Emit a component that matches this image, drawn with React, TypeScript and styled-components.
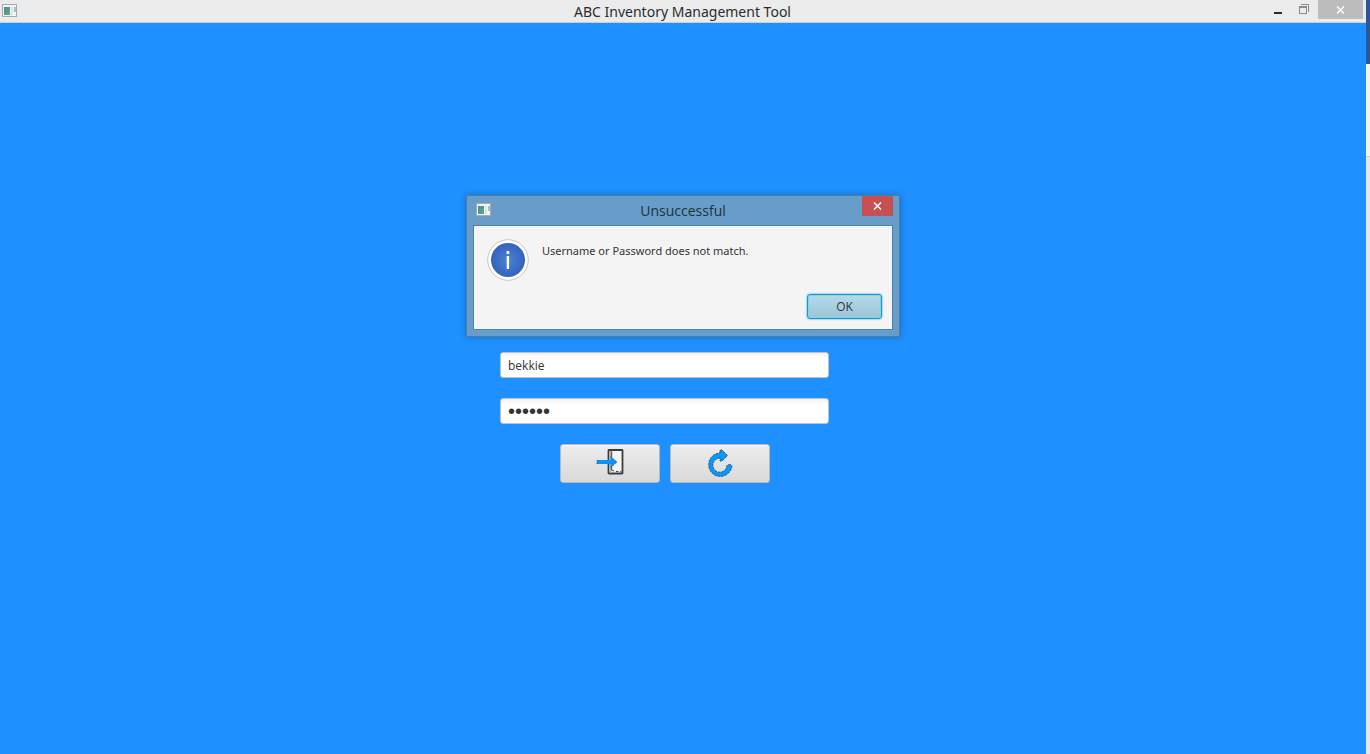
import React, { useState } from 'react';
import styled, { createGlobalStyle } from 'styled-components';

const GlobalStyle = createGlobalStyle`
  *, *::before, *::after { box-sizing: border-box; }
  body {
    margin: 0;
    font-family: 'Open Sans', 'Noto Sans', sans-serif;
    color: #333;
  }
  button, input { font: inherit; color: inherit; }
`;

const Desktop = styled.div`
  display: flex;
  min-height: 100vh;
`;

const AppWindow = styled.div`
  position: relative;
  flex: 1;
  display: flex;
  flex-direction: column;
`;

const BackgroundApp = styled.div`
  display: flex;
  flex-direction: column;
  width: 4px;
  background: #e6e6e6;
`;

const BackgroundHeader = styled.div`
  height: 64px;
  background: #2b579a;
`;

const BackgroundToolbar = styled.div`
  height: 93px;
  background: #f3f3f3;
  border-bottom: 1px solid #cfcfcf;
`;

const TitleBar = styled.header`
  display: grid;
  grid-template-columns: 1fr auto 1fr;
  height: 23px;
  padding: 0 3px 0 2px;
  background: #ebebeb;
  border-bottom: 1px solid #d2cfcb;
`;

const TitleIcon = styled.div`
  display: flex;
  align-items: center;
  height: 22px;
`;

const AppTitle = styled.h1`
  margin: 0;
  font-family: 'Noto Sans', sans-serif;
  font-size: 14px;
  line-height: 24px;
  font-weight: 400;
  color: #2b2b2b;
`;

const WindowControls = styled.div`
  display: flex;
  justify-content: flex-end;
`;

const ControlButton = styled.button<{ $width: number; $fill?: string }>`
  display: flex;
  align-items: center;
  justify-content: center;
  width: ${(p) => p.$width}px;
  height: ${(p) => (p.$width === 31 ? 20 : 19)}px;
  padding: 0;
  border: 0;
  background: ${(p) => p.$fill ?? 'transparent'};
`;

const Content = styled.main`
  flex: 1;
  display: flex;
  justify-content: center;
  padding: 329px 37px 20px 0;
  background: #1e90ff;
`;

const LoginForm = styled.form`
  display: flex;
  flex-direction: column;
  align-items: center;
  gap: 20px;
  width: 329px;
`;

const Field = styled.input`
  width: 100%;
  height: 26px;
  padding: 0 7px;
  border: 1px solid #c0c0c0;
  border-radius: 3px;
  background: linear-gradient(#f0f0f0, #fff 5px);
  font-size: 12px;
  outline: none;

  &[type='password'] {
    font-family: 'Liberation Sans', sans-serif;
    font-size: 20px;
  }
`;

const Actions = styled.div`
  display: flex;
  gap: 10px;
`;

const ActionButton = styled.button`
  display: flex;
  align-items: center;
  justify-content: center;
  width: 100px;
  height: 39px;
  padding: 0;
  border: 1px solid #b8b8b8;
  border-radius: 3px;
  background: linear-gradient(#ededed, #d9d9d9);
  box-shadow: inset 0 1px #f8f8f8;
`;

const Dialog = styled.section`
  position: absolute;
  top: 195px;
  left: 50%;
  transform: translateX(-50%);
  width: 434px;
  padding: 0 6px 6px;
  border: 1px solid #4d7ca0;
  background: #679dc8;
  box-shadow: 0 0 6px rgba(0, 0, 0, 0.25);
`;

const DialogHeader = styled.header`
  display: grid;
  grid-template-columns: 1fr auto 1fr;
  height: 29px;
`;

const DialogIcon = styled(TitleIcon)`
  height: 28px;
  padding-left: 3px;
`;

const DialogTitle = styled.h2`
  margin: 0;
  font-size: 14px;
  line-height: 30px;
  font-weight: 400;
  color: #22303c;
`;

const DialogBody = styled.div`
  display: flex;
  flex-direction: column;
  justify-content: space-between;
  height: 105px;
  padding: 13px 10px 10px 13px;
  border: 1px solid #4c83ad;
  background: #f4f4f4;
`;

const Message = styled.div`
  display: flex;
  gap: 13px;
`;

const MessageText = styled.p`
  margin: 3px 0 0;
  font-family: 'Noto Sans', sans-serif;
  font-size: 11px;
  line-height: 18px;
`;

const OkButton = styled.button`
  align-self: flex-end;
  width: 75px;
  height: 25px;
  padding: 0;
  border: 1px solid #039ed3;
  border-radius: 3px;
  background: linear-gradient(#b5d9e9, #9bc5d8);
  box-shadow: 0 0 2px #039ed3, inset 0 0 0 1px #8fcfe5;
  font-size: 12px;
`;

const JavaWindowIcon = () => (
  <svg width="16" height="14" viewBox="0 0 16 14" aria-hidden="true">
    <defs>
      <linearGradient id="pane" x1="0" y1="0" x2="1" y2="1">
        <stop offset="0" stopColor="#5484a4" />
        <stop offset="1" stopColor="#55b07c" />
      </linearGradient>
    </defs>
    <rect x="0.5" y="0.5" width="14" height="12" fill="#f4f4f6" stroke="#a5a8ac" />
    <rect x="2" y="3" width="6" height="8" fill="url(#pane)" />
    <rect x="9" y="3" width="2" height="8" fill="#e0e2e2" />
    <rect x="12" y="3" width="2" height="5" fill="#9ac9c0" />
  </svg>
);

const CloseGlyph = () => (
  <svg width="9" height="8" viewBox="0 0 9 8" aria-hidden="true">
    <path d="M1 0.5 8 7.5M8 0.5 1 7.5" stroke="#fff" strokeWidth="1.5" />
  </svg>
);

const MinimizeGlyph = () => (
  <svg width="8" height="10" viewBox="0 0 8 10" aria-hidden="true">
    <path d="M0 7h8v2H0z" fill="#2b2b2b" />
  </svg>
);

const RestoreGlyph = () => (
  <svg width="12" height="11" viewBox="0 0 12 11" aria-hidden="true">
    <path d="M2 .5h7.500v7.500" fill="none" stroke="#8a8a8a" />
    <path d="M0 2h8v8H0zM1 4v5h6V4z" fill="#8a8a8a" fillRule="evenodd" />
  </svg>
);

const InfoIcon = () => (
  <svg width="42" height="42" viewBox="0 0 42 42" aria-hidden="true">
    <defs>
      <radialGradient id="info">
        <stop offset="0" stopColor="#4a85d4" />
        <stop offset="1" stopColor="#3461bd" />
      </radialGradient>
    </defs>
    <circle cx="21" cy="21" r="20.300" fill="#fff" stroke="#c6c6c6" />
    <circle cx="21" cy="21" r="17" fill="url(#info)" />
    <path d="M19.600 12h2.600v3h-2.600zM19.700 17h2.400v13h-2.400z" fill="#fff" />
  </svg>
);

const LoginIcon = () => (
  <svg width="40" height="37" viewBox="0 1 40 37" aria-hidden="true">
    <rect x="18.500" y="6" width="14" height="23.500" rx="0.500" fill="#f5f5f5" stroke="#3c3c3c" strokeWidth="1.800" />
    <path d="M19.400 7h2.300v21.500h-2.300z" fill="#b4b4b4" />
    <path d="M21.700 7.500V26l2.500 1M26 27.500h2.500M30 27.800h1.500" fill="none" stroke="#444" strokeWidth="1" />
    <path d="M7 16h13.500v-3.500L27 18l-6.500 5.500V20H7z" fill="#0595ff" />
    <path d="M7 20v-4M20.500 12.500 27 18l-6.500 5.500" fill="none" stroke="#28617f" strokeWidth="0.800" strokeDasharray="2 1" />
  </svg>
);

const ResetIcon = () => (
  <svg width="40" height="37" viewBox="0 1 40 37" aria-hidden="true">
    <path
      d="M20 9V6h2l5.500 5.500L22 17h-2v-2.800A7 7 0 1 0 26.800 22q.3-1.500 2.500-1.500T32 22A11.700 11.700 0 1 1 20 9z"
      fill="#0697ff"
      stroke="#3b4c58"
      strokeWidth="0.900"
      strokeDasharray="2.500 1"
    />
  </svg>
);

export default function App() {
  const [username, setUsername] = useState('bekkie');
  const [password, setPassword] = useState('secret');

  return (
    <>
      <GlobalStyle />
      <Desktop>
        <AppWindow>
          <TitleBar>
            <TitleIcon>
              <JavaWindowIcon />
            </TitleIcon>
            <AppTitle>ABC Inventory Management Tool</AppTitle>
            <WindowControls>
              <ControlButton type="button" $width={28} aria-label="Minimize">
                <MinimizeGlyph />
              </ControlButton>
              <ControlButton type="button" $width={26} aria-label="Restore">
                <RestoreGlyph />
              </ControlButton>
              <ControlButton type="button" $width={45} $fill="#bcbcbc" aria-label="Close">
                <CloseGlyph />
              </ControlButton>
            </WindowControls>
          </TitleBar>
          <Content>
            <LoginForm onSubmit={(e) => e.preventDefault()}>
              <Field
                type="text"
                aria-label="Username"
                value={username}
                onChange={(e) => setUsername(e.target.value)}
              />
              <Field
                type="password"
                aria-label="Password"
                value={password}
                onChange={(e) => setPassword(e.target.value)}
              />
              <Actions>
                <ActionButton type="submit" aria-label="Log in">
                  <LoginIcon />
                </ActionButton>
                <ActionButton type="reset" aria-label="Reset">
                  <ResetIcon />
                </ActionButton>
              </Actions>
            </LoginForm>
          </Content>
          <Dialog role="alertdialog" aria-labelledby="dialog-title" aria-describedby="dialog-text">
            <DialogHeader>
              <DialogIcon>
                <JavaWindowIcon />
              </DialogIcon>
              <DialogTitle id="dialog-title">Unsuccessful</DialogTitle>
              <WindowControls>
                <ControlButton type="button" $width={31} $fill="#c75050" aria-label="Close dialog">
                  <CloseGlyph />
                </ControlButton>
              </WindowControls>
            </DialogHeader>
            <DialogBody>
              <Message>
                <InfoIcon />
                <MessageText id="dialog-text">Username or Password does not match.</MessageText>
              </Message>
              <OkButton type="button">OK</OkButton>
            </DialogBody>
          </Dialog>
        </AppWindow>
        <BackgroundApp>
          <BackgroundHeader />
          <BackgroundToolbar />
        </BackgroundApp>
      </Desktop>
    </>
  );
}
